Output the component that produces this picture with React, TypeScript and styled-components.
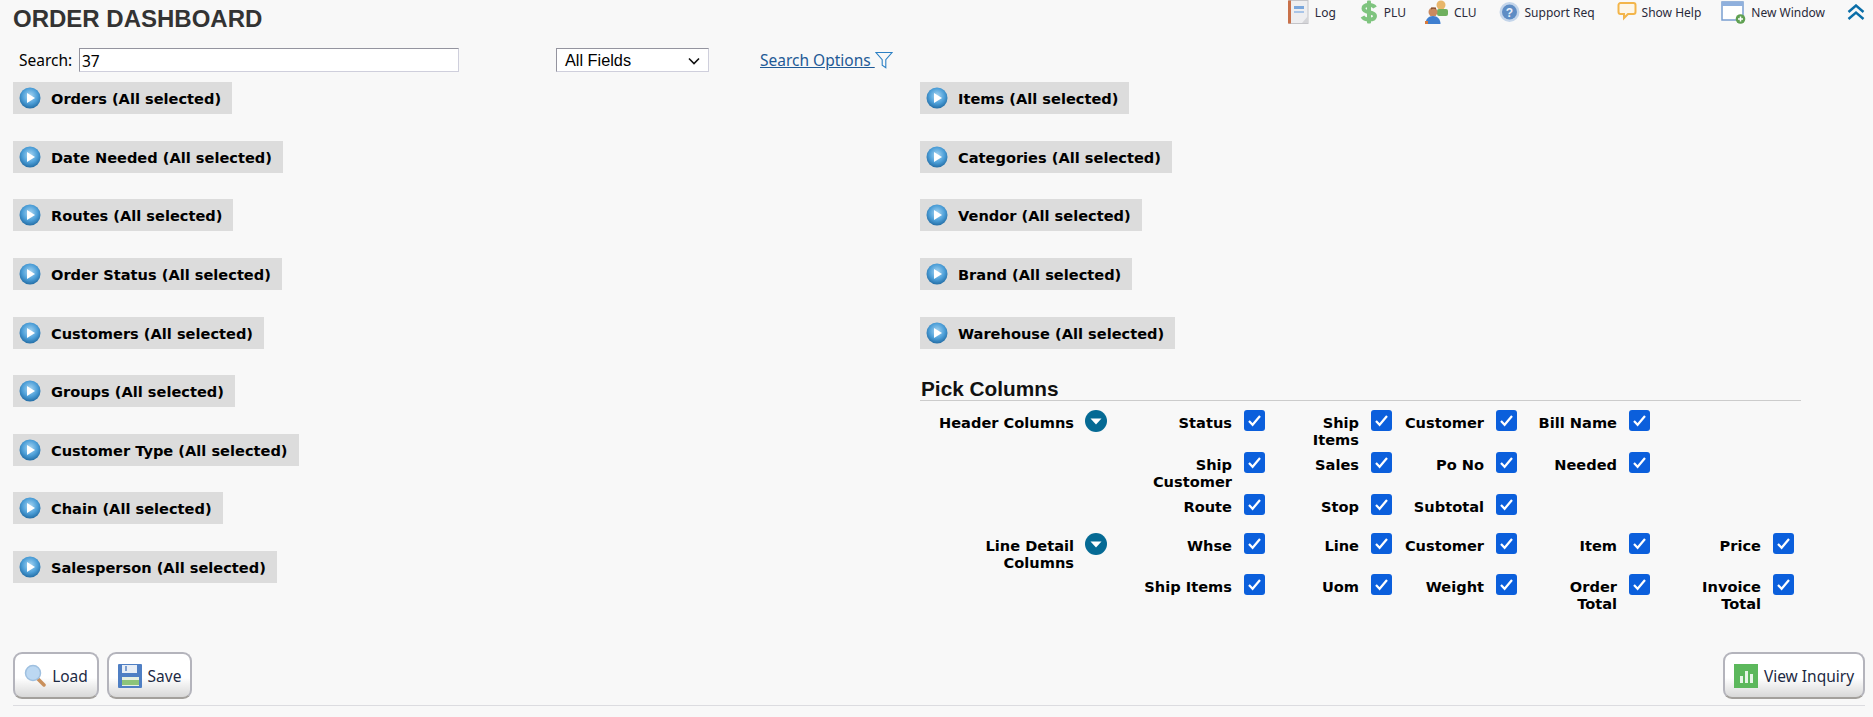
import React, { FC, ReactNode } from "react"
import styled, { createGlobalStyle } from "styled-components"

const boldFont = `"DejaVu Sans", "Liberation Sans", sans-serif`

const GlobalStyle = createGlobalStyle`
  html, body {
    margin: 0;
    padding: 0;
    background: #f8f8f8;
    overflow: hidden;
  }
  body {
    font-family: "Noto Sans", "Liberation Sans", sans-serif;
    color: #000;
  }
`

const Page = styled.div`
  width: 1873px;
  height: 717px;
  box-sizing: border-box;
  padding: 0 8px 0 13px;
`

const TopBar = styled.div`
  display: flex;
  justify-content: space-between;
  height: 48px;
`

const Title = styled.h1`
  margin: 6px 0 0 0;
  font: bold 24px/26px "Liberation Sans", Arial, sans-serif;
  color: #333;
`

const Toolbar = styled.div`
  display: flex;
  align-items: flex-start;
`

const ToolItem = styled.a<{ $gap: number }>`
  display: flex;
  align-items: center;
  height: 24px;
  margin-right: ${ p => p.$gap }px;
  gap: 5px;
  font: 12px "Noto Sans", sans-serif;
  color: #2a2a3a;
`

const CollapseIcon = styled.svg`
  display: block;
  margin-top: 4px;
`

const SearchRow = styled.div`
  display: flex;
  align-items: center;
  height: 24px;
  margin-bottom: 10px;
  font-size: 15.5px;
`

const SearchLabel = styled.label`
  width: 66px;
  padding-left: 6px;
  box-sizing: border-box;
`

const SearchInput = styled.input`
  width: 380px;
  height: 24px;
  box-sizing: border-box;
  padding: 2px 2px 0;
  border: 1px solid #cfcfdc;
  border-top-color: #94949f;
  border-left-color: #94949f;
  background: #fff;
  font: 15.5px "Noto Sans", sans-serif;
`

const FieldSelect = styled.div`
  display: flex;
  align-items: center;
  justify-content: space-between;
  width: 153px;
  height: 24px;
  box-sizing: border-box;
  margin-left: 97px;
  padding: 1px 8px 0;
  border: 1px solid #cfcfdc;
  border-top-color: #94949f;
  border-left-color: #94949f;
  background: #fff;
  font: 16.3px "Liberation Sans", Arial, sans-serif;
`

const SearchOptions = styled.a`
  display: flex;
  align-items: center;
  margin-left: 51px;
  color: #1f5a96;
  font-size: 15.5px;
  text-decoration: underline;
  white-space: pre;
`

const Main = styled.div`
  display: grid;
  grid-template-columns: 907px 1fr;
  height: 570px;
`

const Stack = styled.div`
  display: grid;
  grid-auto-rows: 58.65px;
  align-content: start;
`

const FilterBar = styled.div`
  display: flex;
  align-items: center;
  align-self: start;
  justify-self: start;
  height: 32px;
  padding: 0 11px 0 6px;
  gap: 10px;
  background: #dcdcdc;
  font-family: ${ boldFont };
  font-size: 14.6px;
  font-weight: 700;
`

const FilterText = styled.span`
  padding-top: 1px;
`

const PickHeading = styled.h2`
  margin: 3px 0 9px;
  width: 880px;
  padding-left: 1px;
  border-bottom: 1px solid #ccc;
  font: bold 20.8px/22px "Liberation Sans", Arial, sans-serif;
  color: #111;
`

const Group = styled.div`
  display: flex;
  width: 880px;
`

const GroupTitle = styled.div`
  display: flex;
  justify-content: flex-end;
  width: 187px;
  gap: 11px;
  font-family: ${ boldFont };
  font-size: 14.6px;
  font-weight: 700;
  line-height: 17px;
  text-align: right;
`

const GroupName = styled.span`
  padding-top: 4px;
  white-space: pre-line;
`

const Rows = styled.div`
  display: flex;
  flex-direction: column;
`

const CheckRow = styled.div<{ $h: number }>`
  display: grid;
  grid-template-columns: 158px 127px 125px 133px 144px;
  height: ${ p => p.$h }px;
`

const CheckCell = styled.label`
  display: flex;
  justify-content: flex-end;
  align-items: flex-start;
  gap: 12px;
`

const CheckText = styled.span`
  padding-top: 4px;
  font-family: ${ boldFont };
  font-size: 14.6px;
  font-weight: 700;
  line-height: 17px;
  text-align: right;
  white-space: pre-line;
`

const CheckBox = styled.span`
  display: flex;
  align-items: center;
  justify-content: center;
  flex: none;
  width: 21px;
  height: 21px;
  border-radius: 3px;
  background: #0b5fdc;
`

const Footer = styled.div`
  display: flex;
  justify-content: space-between;
  height: 53px;
  border-bottom: 1px solid #dcdce0;
`

const ButtonGroup = styled.div`
  display: flex;
  gap: 8px;
`

const ActionButton = styled.button<{ $w: number }>`
  display: flex;
  align-items: center;
  justify-content: center;
  gap: 6px;
  width: ${ p => p.$w }px;
  height: 47px;
  padding: 1px 0 0;
  border: 2px solid #b4b4bc;
  border-bottom-color: #a3a09c;
  border-radius: 9px;
  background: linear-gradient(#fff 0%, #fff 55%, #d8d8d8 100%);
  font: 15.5px "Noto Sans", sans-serif;
  color: #1d2a44;
`

const PlayIcon: FC = () => (
  <svg width="22" height="22" viewBox="0 0 22 22">
    <defs>
      <radialGradient id="play" cx="50%" cy="40%" r="60%">
        <stop offset="0%" stopColor="#a9d6f2" />
        <stop offset="60%" stopColor="#4d9fd8" />
        <stop offset="100%" stopColor="#246ea6" />
      </radialGradient>
    </defs>
    <circle cx="11" cy="11" r="10.5" fill="url(#play)" />
    <path d="M8 6l8 5-8 5z" fill="#fff" />
  </svg>
)

const DownIcon: FC = () => (
  <svg width="22" height="22" viewBox="0 0 22 22">
    <circle cx="11" cy="11" r="11" fill="#056a94" />
    <path d="M5.5 8.5h11L11 14.5z" fill="#fff" />
  </svg>
)

const Tick: FC = () => (
  <svg width="15" height="13" viewBox="0 0 15 13">
    <path d="M2 7l3.6 3.8L13 2" fill="none" stroke="#fff" strokeWidth="2.2" />
  </svg>
)

const LogIcon: FC = () => (
  <svg width="23" height="24" viewBox="0 0 23 24">
    <rect x="2" y="0.5" width="19" height="23" fill="#eeeef0" stroke="#c4c4c8" />
    <rect x="1" y="0.5" width="3" height="23" fill="#c9714a" />
    <rect x="7" y="6" width="10" height="3" fill="#7aa7dc" />
    <rect x="7" y="11" width="10" height="2" fill="#a9c5e8" />
    <path d="M21 16l-6 7h6z" fill="#d5d5d8" />
  </svg>
)

const DollarIcon: FC = () => (
  <svg width="20" height="24" viewBox="0 0 20 24">
    <path
      d="M16 7.5C15 5.5 13 5 10 5 6.5 5 4.5 6.5 4.5 8.5c0 5 11.5 2.5 11.5 7.5 0 2.2-2.5 3.5-6 3.5-3 0-5.5-1-6.5-3"
      fill="none" stroke="#7fc47f" strokeWidth="4"
    />
    <rect x="8" y="0.5" width="4" height="23" rx="1" fill="#7fc47f" />
  </svg>
)

const PeopleIcon: FC = () => (
  <svg width="24" height="24" viewBox="0 0 24 24">
    <circle cx="16" cy="5" r="4.5" fill="#e8b66a" />
    <rect x="12" y="9" width="11" height="7" rx="2" fill="#6fb05e" />
    <circle cx="8" cy="12" r="4.5" fill="#c98a60" />
    <path d="M6 9.5a4 3 0 0 1 5 0v-2H6z" fill="#8a5230" />
    <path d="M0.5 24c0-5 3-8 7.500-8s7.500 3 7.500 8z" fill="#3f7fd0" />
    <rect x="0" y="21" width="3" height="3" fill="#d87a3a" />
  </svg>
)

const HelpIcon: FC = () => (
  <svg width="21" height="24" viewBox="0 0 21 24">
    <circle cx="10.5" cy="12" r="10" fill="#c4d5ea" />
    <circle cx="10.500" cy="12" r="7.500" fill="#5e8cc4" />
    <text x="10.5" y="16.500" textAnchor="middle" fontSize="12" fontWeight="700" fill="#e8f0fa" fontFamily="Liberation Sans">?</text>
  </svg>
)

const BubbleIcon: FC = () => (
  <svg width="20" height="24" viewBox="0 0 20 24">
    <path
      d="M3.500 3h13a2 2 0 0 1 2 2v7a2 2 0 0 1-2 2H11l-4 4v-4H3.500a2 2 0 0 1-2-2V5a2 2 0 0 1 2-2z"
      fill="#fdf6e8" stroke="#f3b54a" strokeWidth="2"
    />
  </svg>
)

const WindowIcon: FC = () => (
  <svg width="25" height="24" viewBox="0 0 25 24">
    <rect x="1" y="2" width="21" height="18" fill="#fff" stroke="#7a9ed0" strokeWidth="1.500" />
    <rect x="1" y="2" width="21" height="4" fill="#8fb0dd" />
    <circle cx="19.500" cy="19" r="4.800" fill="#5fa052" />
    <path d="M19.500 16.500v5M17 19h5" stroke="#fff" strokeWidth="1.500" />
  </svg>
)

const FunnelIcon: FC = () => (
  <svg width="18" height="18" viewBox="0 0 18 18">
    <path d="M1 1.500h16l-6.200 7.200v8l-3.600-2.500V8.700z" fill="none" stroke="#2c80c4" strokeWidth="1.100" />
  </svg>
)

const SearchGlassIcon: FC = () => (
  <svg width="22" height="24" viewBox="0 0 22 24">
    <path d="M13 14l7 7" stroke="#c98f5a" strokeWidth="3.500" strokeLinecap="round" />
    <circle cx="9" cy="9" r="7.500" fill="#bcd8f2" stroke="#9fc0e0" strokeWidth="1.500" />
  </svg>
)

const FloppyIcon: FC = () => (
  <svg width="24" height="24" viewBox="0 0 24 24">
    <rect x="0" y="0" width="24" height="24" rx="1" fill="#4f7fc4" />
    <rect x="4" y="1" width="15" height="8" fill="#e8eef6" />
    <rect x="7" y="2" width="2" height="5" fill="#7d9fd0" />
    <rect x="4" y="13" width="17" height="9" fill="#e8f0e0" />
    <rect x="4" y="16" width="17" height="5" fill="#8cc47a" />
  </svg>
)

const ChartIcon: FC = () => (
  <svg width="24" height="24" viewBox="0 0 24 24">
    <rect width="24" height="24" fill="#5cb85c" />
    <rect x="6" y="12" width="3" height="7" fill="#e8f5e8" />
    <rect x="11" y="7" width="3" height="12" fill="#e8f5e8" />
    <rect x="16" y="10" width="3" height="9" fill="#e8f5e8" />
  </svg>
)

const tools: { label: string, icon: ReactNode, gap: number }[] = [
  { label: "Log", icon: <LogIcon />, gap: 23 },
  { label: "PLU", icon: <DollarIcon />, gap: 19 },
  { label: "CLU", icon: <PeopleIcon />, gap: 22 },
  { label: "Support Req", icon: <HelpIcon />, gap: 22 },
  { label: "Show Help", icon: <BubbleIcon />, gap: 20 },
  { label: "New Window", icon: <WindowIcon />, gap: 22 }
]

const leftFilters = ["Orders", "Date Needed", "Routes", "Order Status", "Customers", "Groups", "Customer Type", "Chain", "Salesperson"]
const rightFilters = ["Items", "Categories", "Vendor", "Brand", "Warehouse"]

const headerRows: { h: number, items: string[] }[] = [
  { h: 42, items: ["Status", "Ship\nItems", "Customer", "Bill Name"] },
  { h: 42, items: ["Ship\nCustomer", "Sales", "Po No", "Needed"] },
  { h: 39, items: ["Route", "Stop", "Subtotal"] }
]

const lineRows: { h: number, items: string[] }[] = [
  { h: 41, items: ["Whse", "Line", "Customer", "Item", "Price"] },
  { h: 41, items: ["Ship Items", "Uom", "Weight", "Order\nTotal", "Invoice\nTotal"] }
]

const Filter: FC<{ name: string }> = ({ name }) => (
  <FilterBar>
    <PlayIcon />
    <FilterText>{ name } (All selected)</FilterText>
  </FilterBar>
)

const ColumnGroup: FC<{ title: string, rows: { h: number, items: string[] }[] }> = ({ title, rows }) => (
  <Group>
    <GroupTitle>
      <GroupName>{ title }</GroupName>
      <DownIcon />
    </GroupTitle>
    <Rows>
      { rows.map(row => (
        <CheckRow key={ row.items[0] } $h={ row.h }>
          { row.items.map(item => (
            <CheckCell key={ item }>
              <CheckText>{ item }</CheckText>
              <CheckBox><Tick /></CheckBox>
            </CheckCell>
          )) }
        </CheckRow>
      )) }
    </Rows>
  </Group>
)

const App: FC = () => (
  <Page>
    <GlobalStyle />
    <TopBar>
      <Title>ORDER DASHBOARD</Title>
      <Toolbar>
        { tools.map(tool => (
          <ToolItem key={ tool.label } $gap={ tool.gap }>
            { tool.icon }
            <span>{ tool.label }</span>
          </ToolItem>
        )) }
        <CollapseIcon width="18" height="16" viewBox="0 0 18 16">
          <path d="M1.500 8L9 1.500 16.500 8M1.500 15L9 8.500 16.500 15" fill="none" stroke="#0a6ea8" strokeWidth="2.400" />
        </CollapseIcon>
      </Toolbar>
    </TopBar>
    <SearchRow>
      <SearchLabel>Search:</SearchLabel>
      <SearchInput defaultValue="37" />
      <FieldSelect>
        <span>All Fields</span>
        <svg width="12" height="8" viewBox="0 0 12 8">
          <path d="M1 1.500l5 5 5-5" fill="none" stroke="#111" strokeWidth="1.600" />
        </svg>
      </FieldSelect>
      <SearchOptions>Search Options <FunnelIcon /></SearchOptions>
    </SearchRow>
    <Main>
      <Stack>
        { leftFilters.map(name => <Filter key={ name } name={ name } />) }
      </Stack>
      <div>
        <Stack>
          { rightFilters.map(name => <Filter key={ name } name={ name } />) }
        </Stack>
        <PickHeading>Pick Columns</PickHeading>
        <ColumnGroup title="Header Columns" rows={ headerRows } />
        <ColumnGroup title={ "Line Detail\nColumns" } rows={ lineRows } />
      </div>
    </Main>
    <Footer>
      <ButtonGroup>
        <ActionButton $w={ 86 }><SearchGlassIcon /> Load</ActionButton>
        <ActionButton $w={ 85 }><FloppyIcon /> Save</ActionButton>
      </ButtonGroup>
      <ActionButton $w={ 142 }><ChartIcon /> View Inquiry</ActionButton>
    </Footer>
  </Page>
)

export default App
